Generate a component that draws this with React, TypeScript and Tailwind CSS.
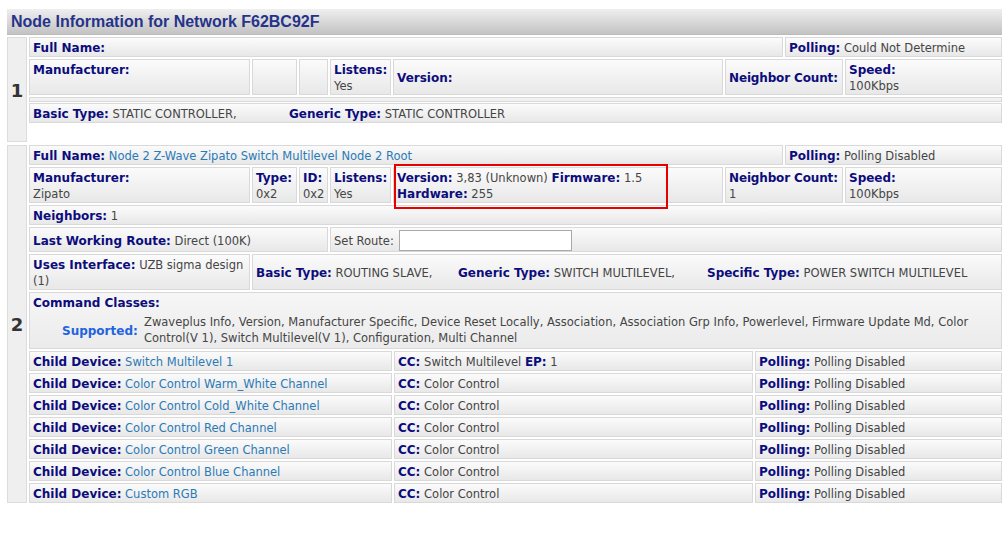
import React from "react";

const cell =
  "border border-[#d9d9d9] bg-linear-to-b from-[#fbfbfb] to-[#e8e8e8] px-[3px] pt-[2px] leading-4 overflow-hidden";

function L({ children, tight }: { children: React.ReactNode; tight?: boolean }) {
  return (
    <span className={`font-bold text-[12px] text-[#0c0c7c] ${tight ? "tracking-[-0.15px]" : ""}`}>{children}</span>
  );
}
function V({ children }: { children: React.ReactNode }) {
  return <span className="text-[#454545]">{children}</span>;
}
function A({ children }: { children: React.ReactNode }) {
  return <span className="text-[#2b7ab6]">{children}</span>;
}

function NumCell({ n }: { n: number }) {
  return (
    <div className="w-[20px] shrink-0 border border-[#dcdcdc] bg-[#efefef] flex items-center justify-center pt-[1px] text-[18px] font-bold text-[#333]">
      {n}
    </div>
  );
}

const children = [
  ["Switch Multilevel 1", "Switch Multilevel", true],
  ["Color Control Warm_White Channel", "Color Control", false],
  ["Color Control Cold_White Channel", "Color Control", false],
  ["Color Control Red Channel", "Color Control", false],
  ["Color Control Green Channel", "Color Control", false],
  ["Color Control Blue Channel", "Color Control", false],
  ["Custom RGB", "Color Control", false],
] as const;

export default function App() {
  return (
    <div className="relative w-[1007px] h-[538px] bg-white font-['DejaVu_Sans',sans-serif] text-[11.5px]">
      <div className="pt-[9px] pl-[7px] w-[1002px]">
        <div className="h-[26px] bg-linear-to-b from-[#efefef] to-[#c3c3c3] border-b border-[#bbbbbb] pl-[4px] flex items-center font-['Liberation_Sans',Arial,sans-serif] font-bold text-[16px] text-[#26338a]">
          Node Information for Network F62BC92F
        </div>

        {/* Node 1 */}
        <div className="flex gap-[2px] mt-[2px] h-[105px]">
          <NumCell n={1} />
          <div className="flex-1 flex flex-col gap-[2px]">
            <div className="flex gap-[2px] h-[20px]">
              <div className={`${cell} w-[754px]`}>
                <L>Full Name:</L>
              </div>
              <div className={`${cell} flex-1`}>
                <L>Polling:</L> <V>Could Not Determine</V>
              </div>
            </div>
            <div className="flex gap-[2px] h-[36px]">
              <div className={`${cell} w-[221px]`}>
                <L>Manufacturer:</L>
              </div>
              <div className={`${cell} w-[45px]`} />
              <div className={`${cell} w-[29px]`} />
              <div className={`${cell} w-[61px]`}>
                <div>
                  <L>Listens:</L>
                </div>
                <V>Yes</V>
              </div>
              <div className={`${cell} w-[330px] flex items-center`}>
                <L>Version:</L>
              </div>
              <div className={`${cell} w-[118px] flex items-center whitespace-nowrap`}>
                <L tight>Neighbor Count:</L>
              </div>
              <div className={`${cell} flex-1`}>
                <div>
                  <L>Speed:</L>
                </div>
                <V>100Kbps</V>
              </div>
            </div>
            <div className="h-[5px] border border-[#d9d9d9] bg-[#f1f1f1]" />
            <div className={`${cell} h-[20px] -mt-[1px]`}>
              <span className="inline-block w-[256px]">
                <L>Basic Type:</L> <V>STATIC CONTROLLER,</V>
              </span>
              <L>Generic Type:</L> <V>STATIC CONTROLLER</V>
            </div>
          </div>
        </div>

        {/* Node 2 */}
        <div className="flex gap-[2px] mt-[3px]">
          <NumCell n={2} />
          <div className="flex-1 flex flex-col gap-[2px]">
            <div className="flex gap-[2px] h-[20px]">
              <div className={`${cell} w-[754px]`}>
                <L>Full Name:</L> <A>Node 2 Z-Wave Zipato Switch Multilevel Node 2 Root</A>
              </div>
              <div className={`${cell} flex-1`}>
                <L>Polling:</L> <V>Polling Disabled</V>
              </div>
            </div>
            <div className="flex gap-[2px] h-[36px]">
              <div className={`${cell} w-[221px]`}>
                <div>
                  <L>Manufacturer:</L>
                </div>
                <V>Zipato</V>
              </div>
              <div className={`${cell} w-[45px]`}>
                <div>
                  <L>Type:</L>
                </div>
                <V>0x2</V>
              </div>
              <div className={`${cell} w-[29px]`}>
                <div>
                  <L>ID:</L>
                </div>
                <V>0x2</V>
              </div>
              <div className={`${cell} w-[61px]`}>
                <div>
                  <L>Listens:</L>
                </div>
                <V>Yes</V>
              </div>
              <div className={`${cell} w-[330px]`}>
                <div>
                  <L>Version:</L> <V>3,83 (Unknown)</V> <L>Firmware:</L> <V>1.5</V>
                </div>
                <div>
                  <L>Hardware:</L> <V>255</V>
                </div>
              </div>
              <div className={`${cell} w-[118px] whitespace-nowrap`}>
                <div>
                  <L tight>Neighbor Count:</L>
                </div>
                <V>1</V>
              </div>
              <div className={`${cell} flex-1`}>
                <div>
                  <L>Speed:</L>
                </div>
                <V>100Kbps</V>
              </div>
            </div>
            <div className={`${cell} h-[20px]`}>
              <L>Neighbors:</L> <V>1</V>
            </div>
            <div className="flex gap-[2px] h-[25px]">
              <div className={`${cell} w-[299px] flex items-center`}>
                <span>
                  <L>Last Working Route:</L> <V>Direct (100K)</V>
                </span>
              </div>
              <div className={`${cell} flex-1 flex items-center`}>
                <V>Set Route:</V>
                <input
                  type="text"
                  className="ml-[5px] -mt-[1px] w-[173px] h-[21px] border border-[#a9a9a9] bg-white outline-none"
                />
              </div>
            </div>
            <div className="flex gap-[2px] h-[36px]">
              <div className={`${cell} w-[221px]`}>
                <div className="whitespace-nowrap">
                  <L>Uses Interface:</L> <V>UZB sigma design</V>
                </div>
                <V>(1)</V>
              </div>
              <div className={`${cell} flex-1 flex items-center`}>
                <span className="inline-block w-[202px] shrink-0">
                  <L>Basic Type:</L> <V>ROUTING SLAVE,</V>
                </span>
                <span className="inline-block w-[249px] shrink-0">
                  <L>Generic Type:</L> <V>SWITCH MULTILEVEL,</V>
                </span>
                <span className="whitespace-nowrap">
                  <L>Specific Type:</L> <V>POWER SWITCH MULTILEVEL</V>
                </span>
              </div>
            </div>
            <div className="h-[57px] border border-[#d9d9d9] bg-linear-to-b from-[#f6f6f6] to-[#ebebeb] px-[3px] pt-[2px] leading-4">
              <div>
                <L>Command Classes:</L>
              </div>
              <div className="flex items-center mt-[3px]">
                <div className="w-[111px] shrink-0 pl-[29px] pt-[1px] font-bold text-[12px] text-[#1f63df]">Supported:</div>
                <div className="text-[#454545] pr-[20px]">
                  Zwaveplus Info, Version, Manufacturer Specific, Device Reset Locally, Association, Association Grp Info,
                  Powerlevel, Firmware Update Md, Color Control(V 1), Switch Multilevel(V 1), Configuration, Multi Channel
                </div>
              </div>
            </div>
            {children.map(([name, cc, ep]) => (
              <div key={name} className="flex gap-[2px] h-[20px]">
                <div className={`${cell} w-[363px] whitespace-nowrap`}>
                  <L>Child Device:</L> <A>{name}</A>
                </div>
                <div className={`${cell} w-[359px] whitespace-nowrap`}>
                  <L>CC:</L> <V>{cc}</V>
                  {ep && (
                    <>
                      {" "}
                      <L>EP:</L> <V>1</V>
                    </>
                  )}
                </div>
                <div className={`${cell} flex-1 whitespace-nowrap`}>
                  <L>Polling:</L> <V>Polling Disabled</V>
                </div>
              </div>
            ))}
          </div>
        </div>
      </div>

      {/* annotation box */}
      <div className="absolute left-[394px] top-[164px] w-[274px] h-[45px] border-2 border-[#e60000] pointer-events-none" />
    </div>
  );
}
